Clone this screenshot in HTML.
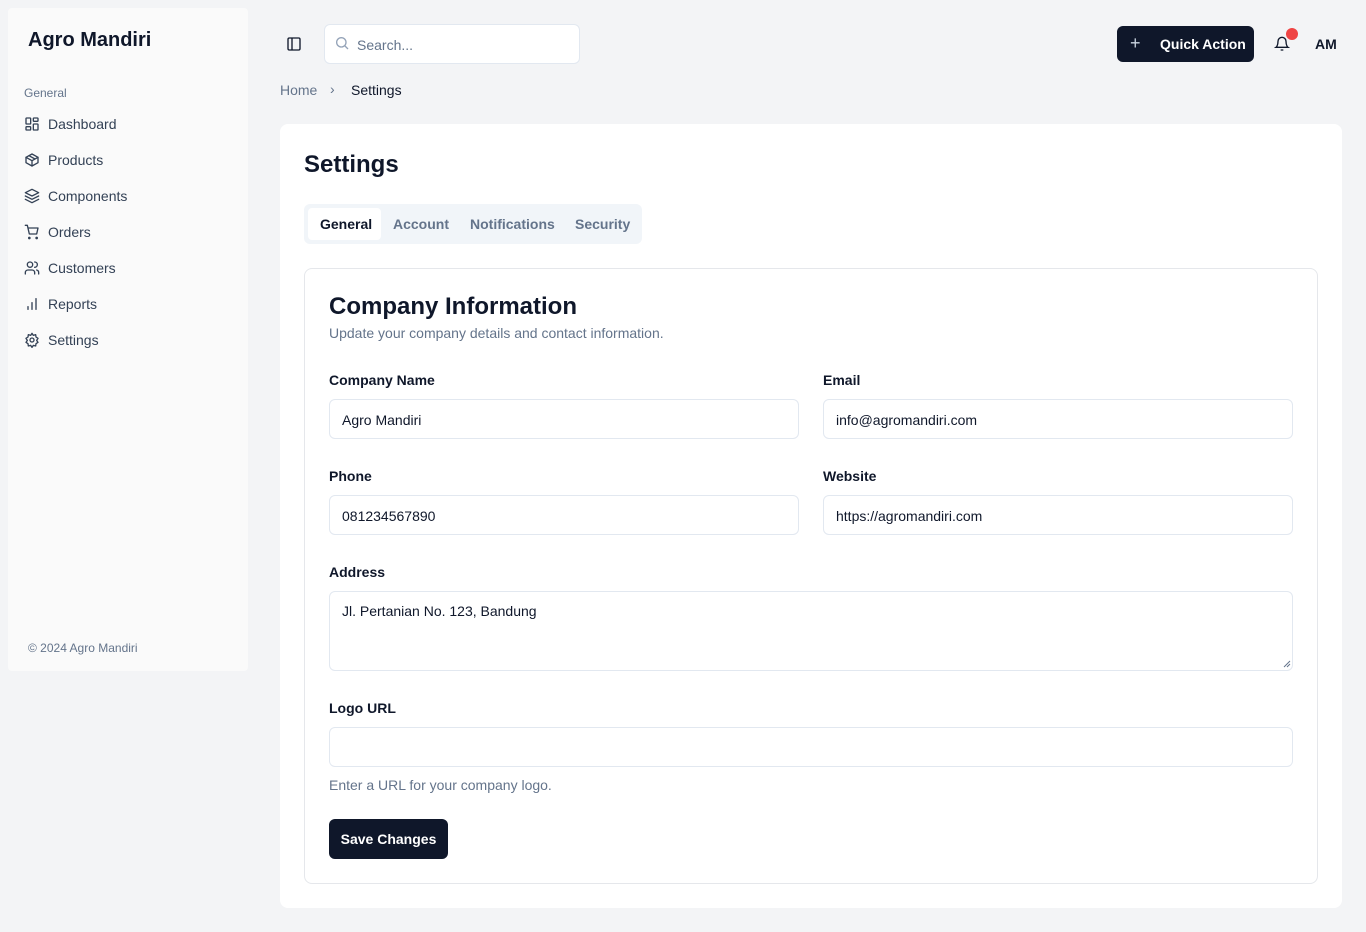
<!DOCTYPE html>
<html><head><meta charset="utf-8"><style>
*{box-sizing:border-box;margin:0;padding:0}
body{width:1366px;height:932px;background:#f3f4f6;font-family:"Liberation Sans",sans-serif;color:#0f172a;position:relative;overflow:hidden}
.abs{position:absolute}
.side{left:8px;top:8px;width:240px;height:663px;background:#fafafa;border-radius:4px}
.brand{left:28px;top:29px;font-size:20px;font-weight:bold;color:#0f172a}
.grp{left:24px;top:86px;font-size:12px;color:#64748b}
.nav{left:16px;font-size:14px;color:#334155;display:flex;align-items:center;gap:8px}
.nav svg{width:16px;height:16px;fill:none;stroke:#334155;stroke-width:2;stroke-linecap:round;stroke-linejoin:round}
.foot{left:28px;top:641px;font-size:12px;color:#64748b}
.search{left:324px;top:24px;width:256px;height:40px;background:#fff;border:1px solid #e2e8f0;border-radius:6px}
.qa{left:1117px;top:26px;width:137px;height:36px;background:#0f172a;border-radius:6px;color:#fff;font-size:14px;font-weight:bold}
.card{left:280px;top:124px;width:1062px;height:784px;background:#fff;border-radius:8px}
.inner{left:304px;top:268px;width:1014px;height:616px;border:1px solid #e5e7eb;border-radius:8px;background:#fff}
.lbl{font-size:14px;font-weight:bold;color:#0f172a}
.inp{height:40px;border:1px solid #e2e8f0;border-radius:6px;background:#fff;font-size:14px;padding:12px 12px 0;color:#0f172a}
</style></head><body>
<div class="abs side"></div>
<div class="abs brand">Agro Mandiri</div>
<div class="abs grp">General</div>
<div class="abs nav" style="top:116px;left:24px"><svg viewBox="0 0 24 24"><rect x="3" y="3" width="7" height="9" rx="1"/><rect x="14" y="3" width="7" height="5" rx="1"/><rect x="14" y="12" width="7" height="9" rx="1"/><rect x="3" y="16" width="7" height="5" rx="1"/></svg>Dashboard</div>
<div class="abs nav" style="top:152px;left:24px"><svg viewBox="0 0 24 24"><path d="M21 8l-9-5-9 5v8l9 5 9-5z"/><path d="M3 8l9 5 9-5M12 13v8M7.5 5.5l9 5"/></svg>Products</div>
<div class="abs nav" style="top:188px;left:24px"><svg viewBox="0 0 24 24"><path d="M12 2l10 5-10 5L2 7z"/><path d="M2 12l10 5 10-5M2 17l10 5 10-5"/></svg>Components</div>
<div class="abs nav" style="top:224px;left:24px"><svg viewBox="0 0 24 24"><circle cx="8" cy="21" r="1"/><circle cx="19" cy="21" r="1"/><path d="M2 2h3l3 13h11l2-9H6"/></svg>Orders</div>
<div class="abs nav" style="top:260px;left:24px"><svg viewBox="0 0 24 24"><circle cx="9" cy="7" r="4"/><path d="M2 21v-2a4 4 0 014-4h6a4 4 0 014 4v2M16 3a4 4 0 010 8M22 21v-2a4 4 0 00-3-4"/></svg>Customers</div>
<div class="abs nav" style="top:296px;left:24px"><svg viewBox="0 0 24 24"><path d="M6 20v-4M12 20V10M18 20V4"/></svg>Reports</div>
<div class="abs nav" style="top:332px;left:24px"><svg viewBox="0 0 24 24"><circle cx="12" cy="12" r="3"/><path d="M12 2l2 3 3.5-1 .5 3.5 3 2-2 3 2 3-3 2-.5 3.5-3.5-1-2 3-2-3-3.5 1-.5-3.5-3-2 2-3-2-3 3-2L6.5 4 10 5z"/></svg>Settings</div>
<div class="abs foot">© 2024 Agro Mandiri</div>

<svg class="abs" style="left:286px;top:36px" width="16" height="16" viewBox="0 0 24 24" fill="none" stroke="#0f172a" stroke-width="2"><rect x="3" y="3" width="18" height="18" rx="2"/><path d="M9 3v18"/></svg>
<div class="abs search"></div>
<svg class="abs" style="left:334px;top:35px" width="16" height="16" viewBox="0 0 24 24" fill="none" stroke="#94a3b8" stroke-width="2"><circle cx="11" cy="11" r="7"/><path d="M21 21l-4.5-4.5"/></svg>
<div class="abs" style="left:357px;top:37px;font-size:14px;color:#64748b">Search...</div>
<div class="abs qa"><span class="abs" style="left:13px;top:7px;font-size:18px;font-weight:normal;color:#cbd5e1">+</span><span class="abs" style="left:43px;top:10px">Quick Action</span></div>
<svg class="abs" style="left:1274px;top:35px" width="16" height="18" viewBox="0 0 24 24" fill="none" stroke="#0f172a" stroke-width="2"><path d="M6 8a6 6 0 0112 0c0 7 3 9 3 9H3s3-2 3-9M10 21h4"/></svg>
<div class="abs" style="left:1286px;top:28px;width:12px;height:12px;border-radius:50%;background:#ef4444"></div>
<div class="abs" style="left:1315px;top:36px;font-size:14px;font-weight:bold">AM</div>

<div class="abs" style="left:280px;top:82px;font-size:14px;color:#64748b">Home</div>
<div class="abs" style="left:330px;top:81px;font-size:14px;color:#64748b">›</div>
<div class="abs" style="left:351px;top:82px;font-size:14px">Settings</div>

<div class="abs card"></div>
<div class="abs" style="left:304px;top:151px;font-size:24px;font-weight:800">Settings</div>
<div class="abs" style="left:304px;top:204px;width:338px;height:40px;background:#f1f5f9;border-radius:6px"></div>
<div class="abs" style="left:308px;top:208px;width:73px;height:32px;background:#fff;border-radius:4px"></div>
<div class="abs" style="left:320px;top:216px;font-size:14px;font-weight:bold">General</div>
<div class="abs" style="left:393px;top:216px;font-size:14px;font-weight:bold;color:#64748b">Account</div>
<div class="abs" style="left:470px;top:216px;font-size:14px;font-weight:bold;color:#64748b">Notifications</div>
<div class="abs" style="left:575px;top:216px;font-size:14px;font-weight:bold;color:#64748b">Security</div>

<div class="abs inner"></div>
<div class="abs" style="left:329px;top:293px;font-size:24px;font-weight:600">Company Information</div>
<div class="abs" style="left:329px;top:325px;font-size:14px;color:#64748b">Update your company details and contact information.</div>

<div class="abs lbl" style="left:329px;top:372px">Company Name</div>
<div class="abs inp" style="left:329px;top:399px;width:470px">Agro Mandiri</div>
<div class="abs lbl" style="left:823px;top:372px">Email</div>
<div class="abs inp" style="left:823px;top:399px;width:470px">info@agromandiri.com</div>
<div class="abs lbl" style="left:329px;top:468px">Phone</div>
<div class="abs inp" style="left:329px;top:495px;width:470px">081234567890</div>
<div class="abs lbl" style="left:823px;top:468px">Website</div>
<div class="abs inp" style="left:823px;top:495px;width:470px">https://agromandiri.com</div>
<div class="abs lbl" style="left:329px;top:564px">Address</div>
<div class="abs inp" style="left:329px;top:591px;width:964px;height:80px;padding-top:11px">Jl. Pertanian No. 123, Bandung</div>
<svg class="abs" style="left:1283px;top:660px" width="8" height="8" viewBox="0 0 8 8" stroke="#64748b" stroke-width="1"><path d="M1 7L7 1M4 7L7 4"/></svg>
<div class="abs lbl" style="left:329px;top:700px">Logo URL</div>
<div class="abs inp" style="left:329px;top:727px;width:964px"></div>
<div class="abs" style="left:329px;top:777px;font-size:14px;color:#64748b">Enter a URL for your company logo.</div>
<div class="abs" style="left:329px;top:819px;width:119px;height:40px;background:#0f172a;border-radius:6px;color:#fff;font-size:14px;font-weight:bold;text-align:center;line-height:40px">Save Changes</div>
</body></html>
